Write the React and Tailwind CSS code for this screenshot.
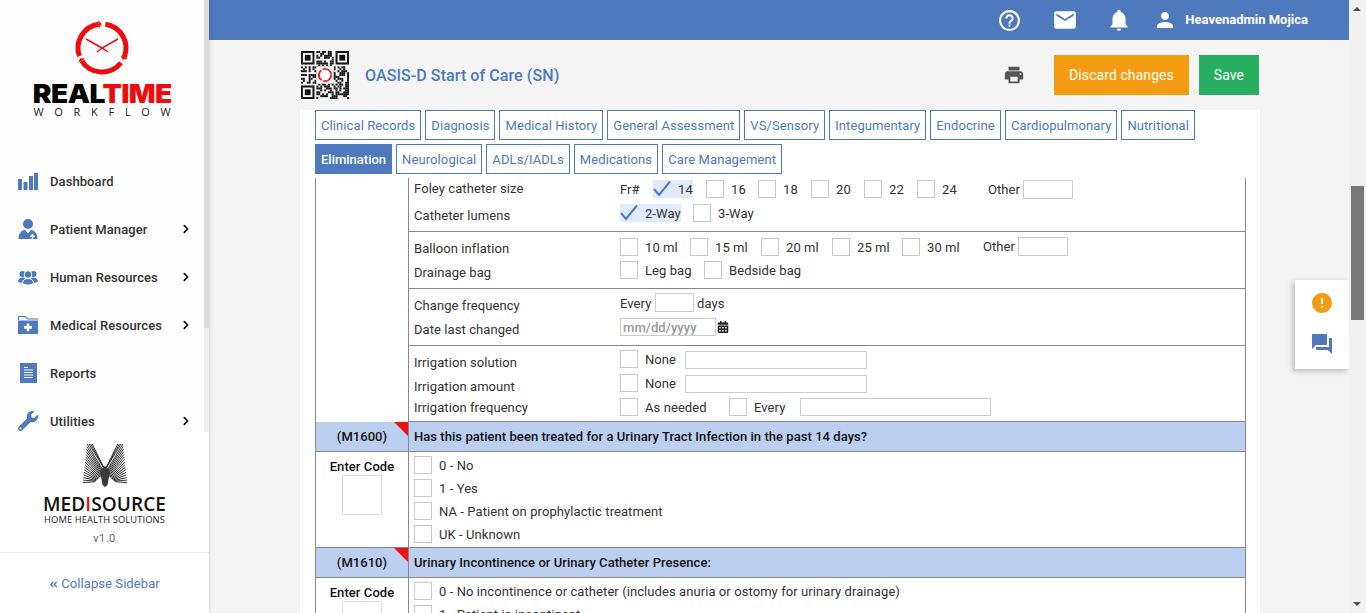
import {
  MdHelpOutline, MdEmail, MdNotifications, MdPerson, MdPrint, MdError, MdQuestionAnswer,
} from 'react-icons/md';
import { FaWrench, FaChevronRight, FaAngleDoubleLeft, FaCalendarAlt } from 'react-icons/fa';

const navItems = [
  { label: 'Dashboard', icon: <BarsIcon /> },
  { label: 'Patient Manager', icon: <PatientIcon />, arrow: true },
  { label: 'Human Resources', icon: <PeopleIcon />, arrow: true },
  { label: 'Medical Resources', icon: <FolderIcon />, arrow: true },
  { label: 'Reports', icon: <ReportIcon /> },
  { label: 'Utilities', icon: <FaWrench size={20} />, arrow: true },
];

const tabs = [
  'Clinical Records', 'Diagnosis', 'Medical History', 'General Assessment', 'VS/Sensory', 'Integumentary',
  'Endocrine', 'Cardiopulmonary', 'Nutritional', 'Elimination', 'Neurological', 'ADLs/IADLs', 'Medications',
  'Care Management',
];

function BarsIcon() {
  return (
    <svg width="20" height="17" viewBox="0 0 20 17" fill="currentColor">
      <rect x="0" y="6" width="4" height="11" />
      <rect x="5.5" y="9" width="4" height="8" />
      <rect x="11" y="3" width="4" height="14" />
      <rect x="16" y="0" width="4" height="17" />
    </svg>
  );
}

function PatientIcon() {
  return (
    <svg width="20" height="20" viewBox="0 0 20 20" fill="currentColor">
      <circle cx="10" cy="5" r="5" />
      <path d="M0.5 20C0.5 14.5 3.5 11.5 7 10.8L10 14.5L13 10.8C16.5 11.5 19.5 14.5 19.5 20Z" />
      <path d="M13.7 15h1.6v1.5h1.5v1.6h-1.5v1.5h-1.6v-1.5h-1.5v-1.6h1.5z" fill="#fff" />
    </svg>
  );
}

function PeopleIcon() {
  return (
    <svg width="20" height="15" viewBox="0 0 20 15" fill="currentColor">
      <circle cx="4.5" cy="4" r="3" />
      <circle cx="15.5" cy="4" r="3" />
      <path d="M0 12C0 9 2 7.5 4.5 7.5S9 9 9 12L7 13.5Z" />
      <path d="M20 12C20 9 18 7.5 15.5 7.5S11 9 11 12L13 13.5Z" />
      <circle cx="10" cy="4.5" r="3.8" stroke="#fff" strokeWidth="1" />
      <path d="M4.5 13C4.5 10 7 8.5 10 8.5S15.5 10 15.5 13C14 14.5 12 15 10 15S6 14.5 4.5 13Z" stroke="#fff" strokeWidth="1" />
    </svg>
  );
}

function FolderIcon() {
  return (
    <svg width="20" height="18" viewBox="0 0 20 18" fill="currentColor">
      <path d="M0 0h7.5l2.5 2.5h10v1H9.5L7 1H1v3h-1z" />
      <path d="M0 4.5h20V18H0z" />
      <path d="M8.7 7.5h2.6v2.6h2.6v2.6h-2.6v2.6H8.7v-2.6H6.1v-2.6h2.6z" fill="#fff" />
    </svg>
  );
}

function ReportIcon() {
  return (
    <svg width="17" height="20" viewBox="0 0 17 20" fill="currentColor" className="ml-[2px]">
      <path d="M0 0h17v20H0z" />
      <path d="M4 4h4v1H4zM4 6.5h9v1H4zM4 9h9v1H4zM4 11.5h9v1H4zM4 14h9v1H4z" fill="#fff" />
    </svg>
  );
}

function polar(r, deg) {
  const a = ((deg - 90) * Math.PI) / 180;
  return [30 + r * Math.cos(a), 30 + r * Math.sin(a)];
}

function ClockLogo() {
  const arcs = [[250, 352], [8, 112], [128, 238]];
  return (
    <svg width="60" height="60" viewBox="0 0 60 60">
      {arcs.map(([from, to]) => {
        const [x1, y1] = polar(24, from);
        const [x2, y2] = polar(24, to);
        const tip = polar(24, to + 7);
        const a = polar(28, to);
        const b = polar(20, to);
        return (
          <g key={from}>
            <path
              d={`M${x1} ${y1} A24 24 0 0 1 ${x2} ${y2}`}
              fill="none"
              stroke="#ee0b0b"
              strokeWidth="5"
            />
            <polygon points={`${a[0]},${a[1]} ${b[0]},${b[1]} ${tip[0]},${tip[1]}`} fill="#ee0b0b" />
          </g>
        );
      })}
      <path d="M14 21 L30 30 L36 34" stroke="#ee0b0b" strokeWidth="1.5" fill="none" />
      <path d="M46 21 L30 30 L25 34" stroke="#ee0b0b" strokeWidth="1.5" fill="none" />
    </svg>
  );
}

function MediLogo() {
  const stripes = [];
  const top = [[11.2, 0], [9.6, 0], [8, 0]];
  top.forEach(([x, y]) => stripes.push([x, y, 24, 26]));
  for (let i = 0; i <= 15; i++) {
    const t = i / 15;
    stripes.push([6.2 - 4.4 * t, 38.7 * t, 23.8 - 10 * t, 29.3 + 8.4 * t]);
  }
  return (
    <svg width="48" height="44" viewBox="0 0 48 44" stroke="#333" strokeWidth="1" fill="none">
      {stripes.map(([x1, y1, x2, y2]) => (
        <g key={`${x1}-${y1}`}>
          <line x1={x1} y1={y1} x2={x2} y2={y2} />
          <line x1={48 - x1} y1={y1} x2={48 - x2} y2={y2} />
        </g>
      ))}
      <path d="M19 27L24 22L29 27L26.5 41L24 43L21.5 41Z" fill="#3a3a3a" stroke="none" />
    </svg>
  );
}

function QrCode() {
  const size = 25;
  const cells = [];
  const inFinder = (x, y, ox, oy) => x >= ox && x < ox + 8 && y >= oy && y < oy + 8;
  for (let y = 0; y < size; y++) {
    for (let x = 0; x < size; x++) {
      if (inFinder(x, y, 0, 0) || inFinder(x, y, 17, 0) || inFinder(x, y, 0, 17)) continue;
      const h = (x * 7 + y * 13 + ((x * y) % 5) * 11 + ((x ^ y) % 3) * 5) % 7;
      if (h < 4) cells.push(<rect key={`${x}-${y}`} x={x} y={y} width="1.02" height="1.02" />);
    }
  }
  const finder = (ox, oy) => (
    <g key={`${ox}-${oy}`}>
      <path d={`M${ox} ${oy}h7v7h-7zM${ox + 1} ${oy + 1}v5h5v-5z`} fillRule="evenodd" />
      <rect x={ox + 2} y={oy + 2} width="3" height="3" />
    </g>
  );
  return (
    <svg width="48" height="48" viewBox="0 0 25 25" fill="#111">
      {cells}
      {finder(0, 0)}
      {finder(18, 0)}
      {finder(0, 18)}
      <rect x="8" y="8" width="9" height="9" fill="#fff" />
      <circle cx="12.5" cy="12.5" r="3.2" fill="none" stroke="#e82121" strokeWidth="1" strokeDasharray="5.9 0.8" />
    </svg>
  );
}

function Sidebar() {
  return (
    <aside className="w-[209px] h-full shrink-0 flex flex-col bg-white shadow-[1px_0_3px_rgba(0,0,0,0.12)] z-10">
      <div className="h-[432px] flex overflow-hidden">
        <div className="w-[204px] shrink-0 bg-[#fdfdfd]">
          <div className="h-[157px] flex flex-col items-center pt-[18px]">
            <ClockLogo />
            <div className="mt-[3px] text-[26px] leading-[26px] font-black font-['Inter'] tracking-[-0.5px] scale-x-[1.08] text-black">
              REAL<span className="text-[#ee0b0b]">TIME</span>
            </div>
            <div className="mt-[-1px] pl-[11px] text-[11px] leading-[12px] tracking-[10.7px] font-['Open_Sans'] text-[#222]">
              WORKFLOW
            </div>
          </div>
          {navItems.map((item) => (
            <div key={item.label} className="h-12 flex items-center relative">
              <span className="w-[50px] pl-[18px] flex items-center text-[#4e79bd]">{item.icon}</span>
              <span className="pt-[2px] text-[13px] font-medium text-[#333]">{item.label}</span>
              {item.arrow && (
                <FaChevronRight size={10} className="absolute left-[181px] top-[19px] text-[#111]" />
              )}
            </div>
          ))}
        </div>
        <div className="w-[5px] bg-[#f1f1f1]">
          <div className="h-[328px] bg-[#dcdcdc]" />
        </div>
      </div>
      <div className="h-[120px] flex flex-col items-center pt-3 bg-white">
        <MediLogo />
        <div className="mt-[6px] text-[19px] leading-[20px] font-semibold font-['Open_Sans'] text-[#111]">
          MED<span className="text-[#ee0b0b]">I</span>SOURCE
        </div>
        <div className="text-[9.4px] leading-[11px] font-medium font-['Open_Sans'] text-[#222]">
          HOME HEALTH SOLUTIONS
        </div>
        <div className="mt-[7px] text-[11px] leading-[14px] tracking-[0.5px] text-[#666]">v1.0</div>
      </div>
      <div className="h-[61px] border-t border-[#e6e6e6] flex items-center justify-center text-[13px] text-[#4e79bd] pt-[2px]">
        <FaAngleDoubleLeft size={9} className="mr-[3px]" />
        Collapse Sidebar
      </div>
    </aside>
  );
}

function TopBar() {
  return (
    <header className="h-10 shrink-0 bg-[#4e79bd] flex items-center text-white relative">
      <div className="ml-auto flex items-center pr-[58px]">
        <MdHelpOutline size={25} />
        <MdEmail size={26} className="ml-[30px]" />
        <MdNotifications size={26} className="ml-[28px]" />
        <MdPerson size={24} className="ml-[21px]" />
        <span className="ml-[8px] text-[13px] font-bold tracking-normal">Heavenadmin Mojica</span>
      </div>
    </header>
  );
}

function Checkbox() {
  return <span className="w-[18px] h-[18px] shrink-0 border border-[#c8c8c8] bg-white" />;
}

function CheckMark() {
  return (
    <svg width="18" height="18" viewBox="0 0 18 18" className="shrink-0">
      <path d="M1 9 L6 15 L17 1.5" fill="none" stroke="#4e79bd" strokeWidth="2" />
    </svg>
  );
}

function Option({ label, checked, className = '' }) {
  return (
    <div className={`flex shrink-0 ${className}`}>
      <div className={`flex items-center h-[18px] ${checked ? 'bg-[#e0eafb]' : ''}`}>
        {checked ? <CheckMark /> : <Checkbox />}
        <span className="ml-[7px] pt-px whitespace-nowrap">{label}</span>
      </div>
    </div>
  );
}

function Line({ label, labelClass = '', heightClass, children }) {
  return (
    <div className={`flex ${heightClass}`}>
      <div className={`w-[206px] shrink-0 h-[18px] leading-[18px] ${labelClass}`}>{label}</div>
      <div className="flex items-start">{children}</div>
    </div>
  );
}

function TextBox({ className }) {
  return <span className={`block shrink-0 border border-[#ccc] bg-white ${className}`} />;
}

function QuestionHeader({ code, text }) {
  return (
    <div className="h-[30px] flex bg-[#bccff0] border-b border-[#888] relative font-medium text-[#111] tracking-[0.05px]">
      <div className="w-[92px] shrink-0 text-center leading-[29px] border-r border-[#888] box-content">{code}</div>
      <div className="pl-[5px] leading-[29px]">{text}</div>
      <span className="absolute left-[78px] top-0 w-0 h-0 border-l-[14px] border-l-transparent border-t-[14px] border-t-[#ee1111]" />
    </div>
  );
}

function CodeOptions({ options, heightClass }) {
  return (
    <div className={`flex border-b border-[#888] ${heightClass}`}>
      <div className="w-[92px] shrink-0 box-content border-r border-[#888] flex flex-col items-center pt-[6px]">
        <div className="font-medium text-[#111] leading-[18px]">Enter Code</div>
        <span className="-mt-px w-10 h-10 shrink-0 border border-[#ddd]" />
      </div>
      <div className="pl-[5px] pt-[4px] flex flex-col gap-[5px]">
        {options.map((o) => (
          <Option key={o} label={o} />
        ))}
      </div>
    </div>
  );
}

function FormTable() {
  return (
    <div className="w-[931px] border-x border-[#888] text-[13px] text-[#333]">
      <div className="flex">
        <div className="w-[92px] shrink-0 box-content border-r border-[#888]" />
        <div className="flex-1 pl-[5px]">
          {/* catheter rows */}
          <div className="h-[54px] border-b border-[#888] pt-[2px] -ml-[5px] pl-[5px]">
            <Line label="Foley catheter size" heightClass="h-[24px]">
              <span className="w-[33px] leading-[18px] pt-px">Fr#</span>
              <Option label="14" checked className="w-[53px]" />
              <Option label="16" className="w-[52px]" />
              <Option label="18" className="w-[53px]" />
              <Option label="20" className="w-[53px]" />
              <Option label="22" className="w-[53px]" />
              <Option label="24" className="w-[71px]" />
              <span className="w-[35px] leading-[18px] pt-px">Other</span>
              <TextBox className="w-[50px] h-[19px]" />
            </Line>
            <Line label="Catheter lumens" labelClass="mt-[3px]" heightClass="h-[27px]">
              <Option label="2-Way" checked className="w-[73px]" />
              <Option label="3-Way" />
            </Line>
          </div>
          <div className="h-[57px] border-b border-[#888] pt-[6px] -ml-[5px] pl-[5px]">
            <Line label="Balloon inflation" labelClass="mt-[2px]" heightClass="h-[23px]">
              <Option label="10 ml" className="w-[70px]" />
              <Option label="15 ml" className="w-[71px]" />
              <Option label="20 ml" className="w-[71px]" />
              <Option label="25 ml" className="w-[70px]" />
              <Option label="30 ml" className="w-[81px]" />
              <span className="w-[35px] leading-[18px]">Other</span>
              <TextBox className="w-[50px] h-[19px] -mt-[1px]" />
            </Line>
            <Line label="Drainage bag" labelClass="mt-[3px]" heightClass="h-[27px]">
              <Option label="Leg bag" className="w-[84px]" />
              <Option label="Bedside bag" />
            </Line>
          </div>
          <div className="h-[57px] border-b border-[#888] pt-[4px] -ml-[5px] pl-[5px]">
            <Line label="Change frequency" labelClass="mt-[4px]" heightClass="h-[25px]">
              <span className="w-[35px] leading-[18px] mt-[2px]">Every</span>
              <TextBox className="w-[39px] h-[19px]" />
              <span className="ml-[3px] leading-[18px] mt-[2px]">days</span>
            </Line>
            <Line label="Date last changed" labelClass="mt-[3px]" heightClass="h-[25px]">
              <span className="block w-[96px] h-[18px] border border-[#ccc] pl-[2px] leading-[17px] text-[#999] font-medium">
                mm/dd/yyyy
              </span>
              <FaCalendarAlt size={12} className="ml-px mt-[3px] text-[#222]" />
            </Line>
          </div>
          <div className="h-[76px] border-b border-[#888] pt-[4px] -ml-[5px] pl-[5px]">
            <Line label="Irrigation solution" labelClass="mt-[4px]" heightClass="h-[24px]">
              <Option label="None" className="w-[65px]" />
              <TextBox className="w-[182px] h-[18px] mt-px" />
            </Line>
            <Line label="Irrigation amount" labelClass="mt-[4px]" heightClass="h-[24px]">
              <Option label="None" className="w-[65px]" />
              <TextBox className="w-[182px] h-[18px] mt-px" />
            </Line>
            <Line label="Irrigation frequency" labelClass="mt-px" heightClass="h-[20px]">
              <Option label="As needed" className="w-[109px]" />
              <Option label="Every" className="w-[71px]" />
              <TextBox className="w-[191px] h-[18px]" />
            </Line>
          </div>
        </div>
      </div>
      <QuestionHeader code="(M1600)" text="Has this patient been treated for a Urinary Tract Infection in the past 14 days?" />
      <CodeOptions
        heightClass="h-[96px]"
        options={['0 - No', '1 - Yes', 'NA - Patient on prophylactic treatment', 'UK - Unknown']}
      />
      <QuestionHeader code="(M1610)" text="Urinary Incontinence or Urinary Catheter Presence:" />
      <CodeOptions
        heightClass="h-[96px]"
        options={['0 - No incontinence or catheter (includes anuria or ostomy for urinary drainage)', '1 - Patient is incontinent']}
      />
    </div>
  );
}

export default function App() {
  return (
    <div className="h-[613px] w-full flex overflow-hidden bg-[#f4f4f4] font-['Roboto',sans-serif] tracking-[0.08px]">
      <Sidebar />
      <div className="flex-1 min-w-0 flex flex-col relative">
        <TopBar />
        <div className="w-[960px] ml-[91px] flex-1 min-h-0 flex flex-col">
          <div className="h-[70px] shrink-0 flex items-center px-px">
            <QrCode />
            <h1 className="ml-4 pt-px text-base font-medium text-[#4e79bd]">OASIS-D Start of Care (SN)</h1>
            <MdPrint size={22} className="ml-auto text-[#555]" />
            <button className="ml-[29px] w-[135px] h-10 bg-[#f39c12] text-white text-sm">Discard changes</button>
            <button className="ml-[10px] w-[60px] h-10 bg-[#27ae60] text-white text-sm">Save</button>
          </div>
          <div className="flex-1 min-h-0 bg-white overflow-hidden pl-[15px]">
            <div className="w-[930px] h-[68px] flex flex-wrap content-start gap-x-[4px] gap-y-[4px]">
              {tabs.map((t) => (
                <div
                  key={t}
                  className={`h-[30px] px-[5px] border border-[#4e79bd] text-[13px] leading-[30px] ${
                    t === 'Elimination' ? 'bg-[#4e79bd] text-white font-medium tracking-normal' : 'text-[#4e79bd] tracking-[0.095px]'
                  }`}
                >
                  {t}
                </div>
              ))}
            </div>
            <FormTable />
          </div>
        </div>

        {/* floating widget */}
        <div className="absolute right-[17px] top-[280px] w-[54px] h-[89px] bg-white shadow-[-2px_2px_6px_rgba(0,0,0,0.25)] flex flex-col items-center pt-[11px] gap-[17px]">
          <MdError size={24} className="text-[#f39c12]" />
          <MdQuestionAnswer size={24} className="text-[#4e79bd]" />
        </div>

        {/* page scrollbar */}
        <div className="absolute right-0 top-0 bottom-0 w-[17px] bg-[#f1f1f1]">
          <span className="absolute left-[4px] top-[7px] w-0 h-0 border-x-[4px] border-x-transparent border-b-[4px] border-b-[#505050]" />
          <div className="absolute left-[2px] top-[186px] w-[13px] h-[134px] bg-[#787878]" />
          <span className="absolute left-[4px] bottom-[7px] w-0 h-0 border-x-[4px] border-x-transparent border-t-[4px] border-t-[#505050]" />
        </div>
      </div>
    </div>
  );
}
